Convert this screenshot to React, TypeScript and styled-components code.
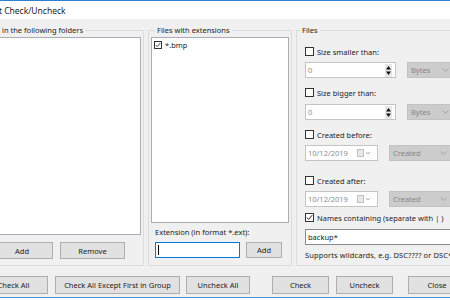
import * as React from "react";
import styled, { createGlobalStyle } from "styled-components";

const GlobalStyle = createGlobalStyle`
  html, body {
    margin: 0;
    padding: 0;
    background: #ffffff;
    overflow: hidden;
  }
  * {
    box-sizing: border-box;
  }
`;

const FONT = `"Noto Sans", "Liberation Sans", sans-serif`;

const Window = styled.div`
  width: 450px;
  height: 300px;
  overflow: hidden;
  font-family: ${FONT};
  font-size: 7.5px;
  color: #1c1c1c;
  border-top: 1px solid #2f7fd2;
`;

const TitleBar = styled.div`
  height: 18px;
  background: #ffffff;
  display: flex;
  align-items: center;
`;

const Title = styled.span`
  font-size: 8.5px;
  margin-left: -22px;
  white-space: nowrap;
`;

const Body = styled.div`
  height: 279px;
  background: #f0f0f0;
  border-bottom: 1px solid #4a97d8;
  display: flex;
  flex-direction: column;
`;

const MainRow = styled.div`
  display: flex;
  align-items: flex-start;
  margin-top: 6px;
  margin-left: -14px;
`;

const Group = styled.fieldset<{ $w: number; $pl: number; $pr: number; $pb: number; $mr?: number }>`
  margin: 0 ${(p) => p.$mr ?? 0}px 0 0;
  padding: 0 ${(p) => p.$pr}px ${(p) => p.$pb}px ${(p) => p.$pl}px;
  width: ${(p) => p.$w}px;
  min-width: 0;
  flex-shrink: 0;
  border: 1px solid #dcdcdc;
  display: flex;
  flex-direction: column;
`;

const Legend = styled.legend<{ $dx: number }>`
  padding: 0 2px;
  margin-left: ${(p) => p.$dx}px;
  height: 11px;
  line-height: 11px;
  white-space: nowrap;
`;

const ListBox = styled.div<{ $h: number }>`
  margin-top: 1px;
  height: ${(p) => p.$h}px;
  background: #ffffff;
  border: 1px solid #abadb3;
  padding: 2px;
`;

const ListItem = styled.div`
  display: flex;
  align-items: center;
  gap: 3px;
  height: 9px;
`;

const ButtonRow = styled.div<{ $mt: number; $ml?: number }>`
  display: flex;
  margin-top: ${(p) => p.$mt}px;
  margin-left: ${(p) => p.$ml ?? 0}px;
`;

const Button = styled.button<{ $w: number; $h: number; $ml?: number }>`
  width: ${(p) => p.$w}px;
  height: ${(p) => p.$h}px;
  margin-left: ${(p) => p.$ml ?? 0}px;
  flex-shrink: 0;
  padding: 0;
  background: #e1e1e1;
  border: 1px solid #adadad;
  border-radius: 0;
  font-family: ${FONT};
  font-size: 7.5px;
  color: #1c1c1c;
  white-space: nowrap;
  overflow: hidden;
`;

const Label = styled.div<{ $mt: number; $pl?: number }>`
  margin-top: ${(p) => p.$mt}px;
  padding-left: ${(p) => p.$pl ?? 0}px;
  height: 11px;
  line-height: 11px;
  white-space: nowrap;
`;

const TextBox = styled.div<{ $w: number; $pr?: number; $focused?: boolean; $disabled?: boolean }>`
  width: ${(p) => p.$w}px;
  height: 16px;
  flex-shrink: 0;
  background: #ffffff;
  border: 1px solid ${(p) => (p.$focused ? "#0078d7" : p.$disabled ? "#c4c4c4" : "#8a8a8a")};
  color: ${(p) => (p.$disabled ? "#8d8d8d" : "#1c1c1c")};
  display: flex;
  align-items: center;
  padding: 0 ${(p) => p.$pr ?? 1}px 0 2px;
  white-space: nowrap;
`;

const Caret = styled.span`
  width: 1px;
  height: 10px;
  background: #000;
`;

const Grow = styled.span`
  flex: 1;
`;

const Combo = styled.div<{ $w: number; $ml: number }>`
  width: ${(p) => p.$w}px;
  height: 16px;
  margin-left: ${(p) => p.$ml}px;
  flex-shrink: 0;
  background: #cccccc;
  border: 1px solid #c2c2c2;
  color: #858585;
  display: flex;
  align-items: center;
  padding: 0 7px 0 3px;
`;

const FieldRow = styled.div<{ $mt: number }>`
  display: flex;
  align-items: center;
  margin-top: ${(p) => p.$mt}px;
`;

const CheckRow = styled.div<{ $mt: number }>`
  display: flex;
  align-items: center;
  gap: 3px;
  height: 11px;
  margin-top: ${(p) => p.$mt}px;
  white-space: nowrap;
`;

const Box = styled.span<{ $size: number }>`
  width: ${(p) => p.$size}px;
  height: ${(p) => p.$size}px;
  flex-shrink: 0;
  border: 1px solid #333333;
  background: #ffffff;
  display: flex;
  align-items: center;
  justify-content: center;
`;

const Note = styled.div`
  margin-top: 5px;
  height: 11px;
  line-height: 11px;
  white-space: nowrap;
  letter-spacing: 0.1px;
`;

function CheckBox({ checked, size = 9 }: { checked?: boolean; size?: number }) {
  return (
    <Box $size={size}>
      {checked && (
        <svg width={size - 2} height={size - 2} viewBox="0 0 7 7">
          <polyline points="0.8,3.6 2.6,5.4 6.2,1.2" fill="none" stroke="#222" strokeWidth="1" />
        </svg>
      )}
    </Box>
  );
}

function Chevron() {
  return (
    <svg width="7" height="4" viewBox="0 0 7 4">
      <polyline points="0.5,0.5 3.5,3.5 6.5,0.5" fill="none" stroke="#a0a0a0" strokeWidth="1" />
    </svg>
  );
}

function Spinner() {
  return (
    <svg width="7" height="13" viewBox="0 0 7 13">
      <rect x="0" y="0" width="7" height="13" fill="#e6e6e6" />
      <polygon points="1,5.5 3.5,2 6,5.5" fill="#111" />
      <polygon points="1,7.5 3.5,11 6,7.5" fill="#111" />
    </svg>
  );
}

function CalendarIcon() {
  return (
    <svg width="15" height="8" viewBox="0 0 15 8">
      <rect x="0.5" y="0.5" width="6" height="7" fill="#e8e8e8" stroke="#c0c0c0" />
      <polyline points="9,3 11,5 13,3" fill="none" stroke="#b0b0b0" strokeWidth="1" />
    </svg>
  );
}

function NumberBox() {
  return (
    <TextBox $w={91} $pr={3} $disabled>
      0
      <Grow />
      <Spinner />
    </TextBox>
  );
}

function DateBox() {
  return (
    <TextBox $w={73} $pr={5} $disabled>
      10/12/2019
      <Grow />
      <CalendarIcon />
    </TextBox>
  );
}

function DisabledCombo({ text, w, ml }: { text: string; w: number; ml: number }) {
  return (
    <Combo $w={w} $ml={ml}>
      {text}
      <Grow />
      <Chevron />
    </Combo>
  );
}

export default function App() {
  return (
    <Window>
      <GlobalStyle />
      <TitleBar>
        <Title>Smart Check/Uncheck</Title>
      </TitleBar>
      <Body>
        <MainRow>
          <Group $w={158} $pl={5} $pr={2} $pb={6} $mr={4}>
            <Legend $dx={8}>in the following folders</Legend>
            <ListBox $h={198} />
            <ButtonRow $mt={7} $ml={-1}>
              <Button $w={62} $h={17}>Add</Button>
              <Button $w={65} $h={17} $ml={7}>Remove</Button>
            </ButtonRow>
          </Group>

          <Group $w={144} $pl={2} $pr={2} $pb={7} $mr={4}>
            <Legend $dx={4}>Files with extensions</Legend>
            <ListBox $h={186}>
              <ListItem>
                <CheckBox checked size={8} />
                *.bmp
              </ListItem>
            </ListBox>
            <Label $mt={4} $pl={4}>Extension (in format *.ext):</Label>
            <ButtonRow $mt={4} $ml={4}>
              <TextBox $w={85} $focused>
                <Caret />
              </TextBox>
              <Button $w={36} $h={16} $ml={6}>Add</Button>
            </ButtonRow>
          </Group>

          <Group $w={185} $pl={8} $pr={8} $pb={4}>
            <Legend $dx={-5}>Files</Legend>
            <CheckRow $mt={10}>
              <CheckBox />
              Size smaller than:
            </CheckRow>
            <FieldRow $mt={5}>
              <NumberBox />
              <DisabledCombo text="Bytes" w={50} ml={11} />
            </FieldRow>
            <CheckRow $mt={9}>
              <CheckBox />
              Size bigger than:
            </CheckRow>
            <FieldRow $mt={6}>
              <NumberBox />
              <DisabledCombo text="Bytes" w={50} ml={11} />
            </FieldRow>
            <CheckRow $mt={9}>
              <CheckBox />
              Created before:
            </CheckRow>
            <FieldRow $mt={5}>
              <DateBox />
              <DisabledCombo text="Created" w={66} ml={11} />
            </FieldRow>
            <CheckRow $mt={14}>
              <CheckBox />
              Created after:
            </CheckRow>
            <FieldRow $mt={5}>
              <DateBox />
              <DisabledCombo text="Created" w={66} ml={11} />
            </FieldRow>
            <CheckRow $mt={5}>
              <CheckBox checked />
              Names containing (separate with | )
            </CheckRow>
            <FieldRow $mt={6}>
              <TextBox $w={160}>backup*</TextBox>
            </FieldRow>
            <Note>Supports wildcards, e.g. DSC???? or DSC*.jpg</Note>
          </Group>
        </MainRow>

        <ButtonRow $mt={10} $ml={-21}>
          <Button $w={69} $h={18}>Check All</Button>
          <Button $w={125} $h={18} $ml={7}>Check All Except First in Group</Button>
          <Button $w={64} $h={18} $ml={6}>Uncheck All</Button>
          <Button $w={57} $h={18} $ml={22}>Check</Button>
          <Button $w={57} $h={18} $ml={7}>Uncheck</Button>
          <Button $w={58} $h={18} $ml={15}>Close</Button>
        </ButtonRow>
      </Body>
    </Window>
  );
}
